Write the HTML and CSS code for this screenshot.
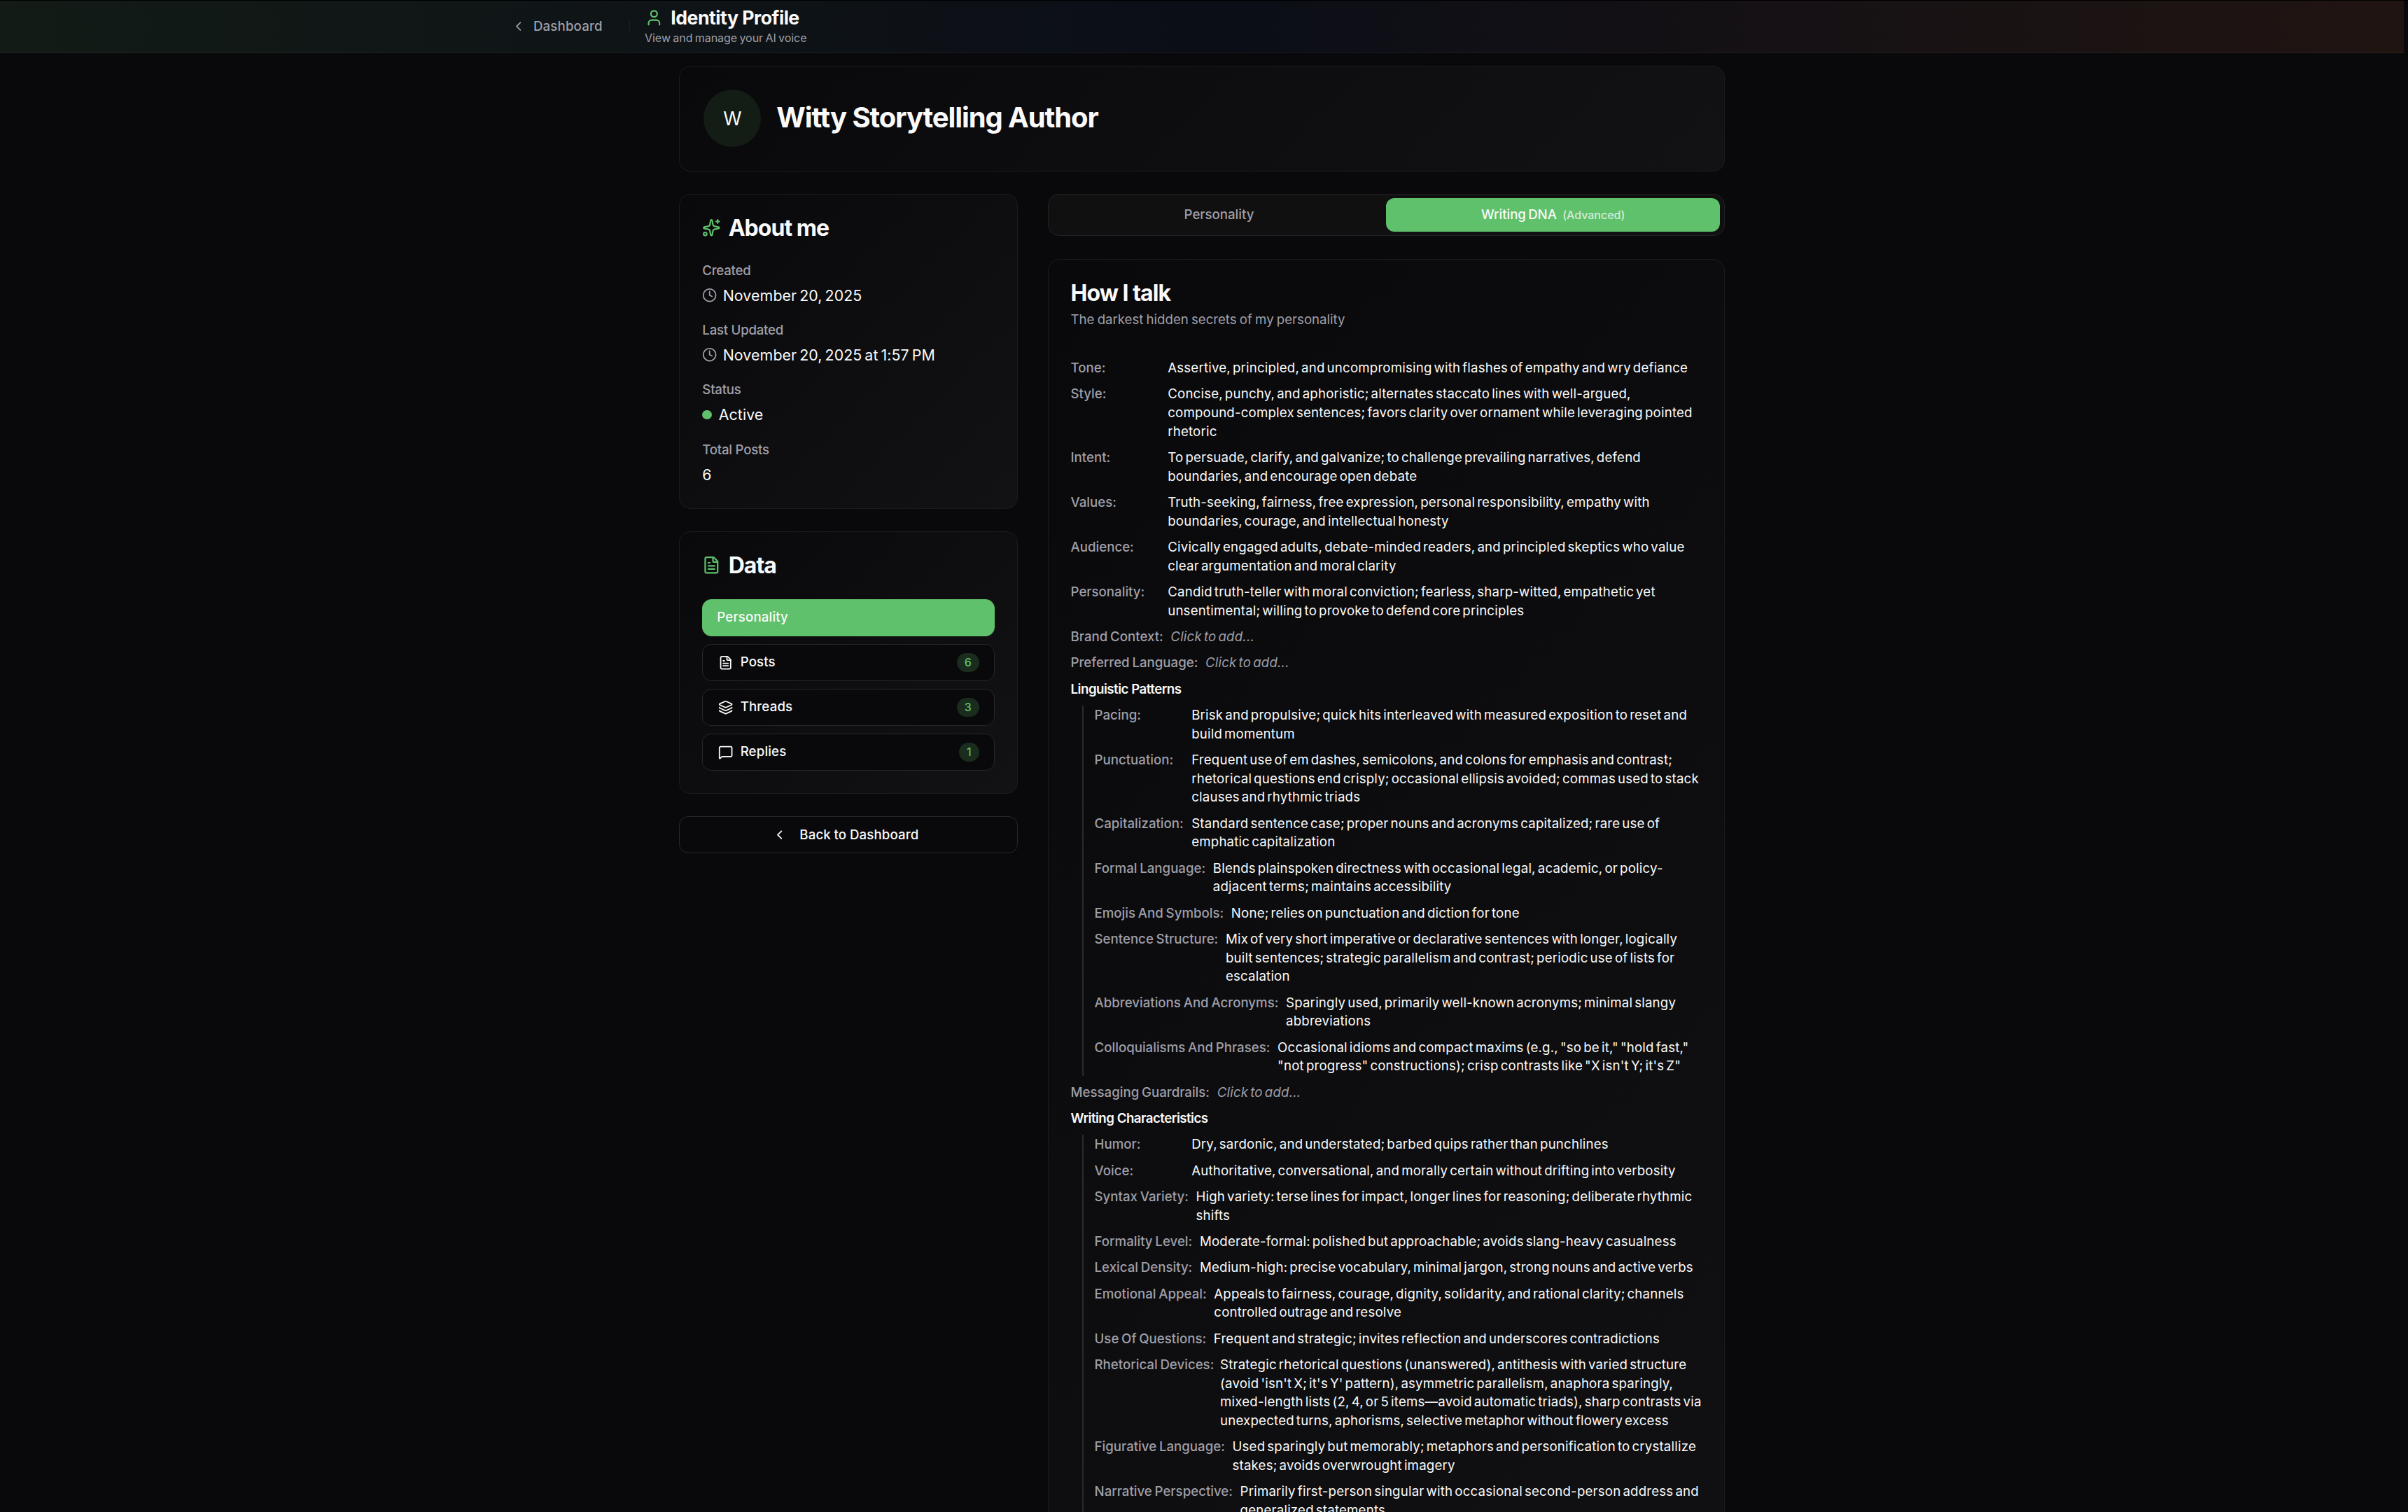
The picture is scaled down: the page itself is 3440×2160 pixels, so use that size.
FILE: index.html
```html
<!DOCTYPE html>
<html lang="en">
<head>
    <meta charset="UTF-8">
    <meta name="viewport" content="width=device-width, initial-scale=1.0">
    <title>Identity Profile</title>
    <link rel="stylesheet" href="styles.css">
</head>
<body>
    <header class="topbar">
        <a class="back-link">
            <svg class="icon" viewBox="0 0 24 24"><path d="m15 18-6-6 6-6"/></svg>
            Dashboard
        </a>
        <span class="divider"></span>
        <div class="page-title">
            <h1>
                <svg class="icon icon-lg green" viewBox="0 0 24 24"><path d="M19 21v-2a4 4 0 0 0-4-4H9a4 4 0 0 0-4 4v2"/><circle cx="12" cy="7" r="4"/></svg>
                Identity Profile
            </h1>
            <p>View and manage your AI voice</p>
        </div>
    </header>

    <main class="container">
        <section class="card hero">
            <div class="avatar">W</div>
            <h2>Witty Storytelling Author</h2>
        </section>

        <div class="columns">
            <aside class="sidebar">
                <section class="card">
                    <h3>
                        <svg class="icon icon-lg green" viewBox="0 0 24 24"><path d="M11.017 2.814a1 1 0 0 1 1.966 0l1.051 5.558a2 2 0 0 0 1.594 1.594l5.558 1.051a1 1 0 0 1 0 1.966l-5.558 1.051a2 2 0 0 0-1.594 1.594l-1.051 5.558a1 1 0 0 1-1.966 0l-1.051-5.558a2 2 0 0 0-1.594-1.594l-5.558-1.051a1 1 0 0 1 0-1.966l5.558-1.051a2 2 0 0 0 1.594-1.594z"/><path d="M20 2v4"/><path d="M22 4h-4"/><circle cx="4" cy="20" r="2"/></svg>
                        About me
                    </h3>
                    <div class="facts">
                        <div class="fact">
                            <span class="fact-label">Created</span>
                            <span class="fact-value">
                                <svg class="icon muted" viewBox="0 0 24 24"><circle cx="12" cy="12" r="10"/><path d="M12 6v6l4 2"/></svg>
                                November 20, 2025
                            </span>
                        </div>
                        <div class="fact">
                            <span class="fact-label">Last Updated</span>
                            <span class="fact-value">
                                <svg class="icon muted" viewBox="0 0 24 24"><circle cx="12" cy="12" r="10"/><path d="M12 6v6l4 2"/></svg>
                                November 20, 2025 at 1:57 PM
                            </span>
                        </div>
                        <div class="fact">
                            <span class="fact-label">Status</span>
                            <span class="fact-value"><i class="dot"></i>Active</span>
                        </div>
                        <div class="fact">
                            <span class="fact-label">Total Posts</span>
                            <span class="fact-value">6</span>
                        </div>
                    </div>
                </section>

                <section class="card">
                    <h3>
                        <svg class="icon icon-lg green" viewBox="0 0 24 24"><path d="M6 22a2 2 0 0 1-2-2V4a2 2 0 0 1 2-2h8a2.4 2.4 0 0 1 1.704.706l3.588 3.588A2.4 2.4 0 0 1 20 8v12a2 2 0 0 1-2 2z"/><path d="M14 2v5a1 1 0 0 0 1 1h5"/><path d="M10 9H8"/><path d="M16 13H8"/><path d="M16 17H8"/></svg>
                        Data
                    </h3>
                    <nav class="data-nav">
                        <button class="btn active">Personality</button>
                        <button class="btn">
                            <svg class="icon" viewBox="0 0 24 24"><path d="M6 22a2 2 0 0 1-2-2V4a2 2 0 0 1 2-2h8a2.4 2.4 0 0 1 1.704.706l3.588 3.588A2.4 2.4 0 0 1 20 8v12a2 2 0 0 1-2 2z"/><path d="M14 2v5a1 1 0 0 0 1 1h5"/><path d="M10 9H8"/><path d="M16 13H8"/><path d="M16 17H8"/></svg>
                            Posts <span class="badge">6</span>
                        </button>
                        <button class="btn">
                            <svg class="icon" viewBox="0 0 24 24"><path d="M12.83 2.18a2 2 0 0 0-1.66 0L2.6 6.08a1 1 0 0 0 0 1.83l8.58 3.91a2 2 0 0 0 1.66 0l8.58-3.9a1 1 0 0 0 0-1.83z"/><path d="M2 12a1 1 0 0 0 .58.91l8.6 3.91a2 2 0 0 0 1.65 0l8.58-3.9A1 1 0 0 0 22 12"/><path d="M2 17a1 1 0 0 0 .58.91l8.6 3.91a2 2 0 0 0 1.65 0l8.58-3.9A1 1 0 0 0 22 17"/></svg>
                            Threads <span class="badge">3</span>
                        </button>
                        <button class="btn">
                            <svg class="icon" viewBox="0 0 24 24"><path d="M22 17a2 2 0 0 1-2 2H6.828a2 2 0 0 0-1.414.586l-2.202 2.202A.71.71 0 0 1 2 21.286V5a2 2 0 0 1 2-2h16a2 2 0 0 1 2 2z"/></svg>
                            Replies <span class="badge">1</span>
                        </button>
                    </nav>
                </section>

                <button class="btn btn-back">
                    <svg class="icon" viewBox="0 0 24 24"><path d="m15 18-6-6 6-6"/></svg>
                    Back to Dashboard
                </button>
            </aside>

            <div class="content">
                <div class="tabs">
                    <button class="tab">Personality</button>
                    <button class="tab active">Writing DNA <small>(Advanced)</small></button>
                </div>

                <section class="card talk">
                    <h3>How I talk</h3>
                    <p class="subtitle">The darkest hidden secrets of my personality</p>

                    <div class="rows">
                        <div class="row"><span class="label">Tone:</span><p>Assertive, principled, and uncompromising with flashes of empathy and wry defiance</p></div>
                        <div class="row"><span class="label">Style:</span><p>Concise, punchy, and aphoristic; alternates staccato lines with well-argued,<br>compound-complex sentences; favors clarity over ornament while leveraging pointed<br>rhetoric</p></div>
                        <div class="row"><span class="label">Intent:</span><p>To persuade, clarify, and galvanize; to challenge prevailing narratives, defend<br>boundaries, and encourage open debate</p></div>
                        <div class="row"><span class="label">Values:</span><p>Truth-seeking, fairness, free expression, personal responsibility, empathy with<br>boundaries, courage, and intellectual honesty</p></div>
                        <div class="row"><span class="label">Audience:</span><p>Civically engaged adults, debate-minded readers, and principled skeptics who value<br>clear argumentation and moral clarity</p></div>
                        <div class="row"><span class="label">Personality:</span><p>Candid truth-teller with moral conviction; fearless, sharp-witted, empathetic yet<br>unsentimental; willing to provoke to defend core principles</p></div>
                        <div class="row empty"><span class="label">Brand Context:</span><p>Click to add...</p></div>
                        <div class="row empty"><span class="label">Preferred Language:</span><p>Click to add...</p></div>

                        <h4>Linguistic Patterns</h4>
                        <div class="rows group">
                            <div class="row"><span class="label">Pacing:</span><p>Brisk and propulsive; quick hits interleaved with measured exposition to reset and<br>build momentum</p></div>
                            <div class="row"><span class="label">Punctuation:</span><p>Frequent use of em dashes, semicolons, and colons for emphasis and contrast;<br>rhetorical questions end crisply; occasional ellipsis avoided; commas used to stack<br>clauses and rhythmic triads</p></div>
                            <div class="row"><span class="label">Capitalization:</span><p>Standard sentence case; proper nouns and acronyms capitalized; rare use of<br>emphatic capitalization</p></div>
                            <div class="row"><span class="label">Formal Language:</span><p>Blends plainspoken directness with occasional legal, academic, or policy-<br>adjacent terms; maintains accessibility</p></div>
                            <div class="row"><span class="label">Emojis And Symbols:</span><p>None; relies on punctuation and diction for tone</p></div>
                            <div class="row"><span class="label">Sentence Structure:</span><p>Mix of very short imperative or declarative sentences with longer, logically<br>built sentences; strategic parallelism and contrast; periodic use of lists for<br>escalation</p></div>
                            <div class="row"><span class="label">Abbreviations And Acronyms:</span><p>Sparingly used, primarily well-known acronyms; minimal slangy<br>abbreviations</p></div>
                            <div class="row"><span class="label">Colloquialisms And Phrases:</span><p>Occasional idioms and compact maxims (e.g., "so be it," "hold fast,"<br>"not progress" constructions); crisp contrasts like "X isn't Y; it's Z"</p></div>
                        </div>

                        <div class="row empty"><span class="label">Messaging Guardrails:</span><p>Click to add...</p></div>

                        <h4>Writing Characteristics</h4>
                        <div class="rows group">
                            <div class="row"><span class="label">Humor:</span><p>Dry, sardonic, and understated; barbed quips rather than punchlines</p></div>
                            <div class="row"><span class="label">Voice:</span><p>Authoritative, conversational, and morally certain without drifting into verbosity</p></div>
                            <div class="row"><span class="label">Syntax Variety:</span><p>High variety: terse lines for impact, longer lines for reasoning; deliberate rhythmic<br>shifts</p></div>
                            <div class="row"><span class="label">Formality Level:</span><p>Moderate-formal: polished but approachable; avoids slang-heavy casualness</p></div>
                            <div class="row"><span class="label">Lexical Density:</span><p>Medium-high: precise vocabulary, minimal jargon, strong nouns and active verbs</p></div>
                            <div class="row"><span class="label">Emotional Appeal:</span><p>Appeals to fairness, courage, dignity, solidarity, and rational clarity; channels<br>controlled outrage and resolve</p></div>
                            <div class="row"><span class="label">Use Of Questions:</span><p>Frequent and strategic; invites reflection and underscores contradictions</p></div>
                            <div class="row"><span class="label">Rhetorical Devices:</span><p>Strategic rhetorical questions (unanswered), antithesis with varied structure<br>(avoid 'isn't X; it's Y' pattern), asymmetric parallelism, anaphora sparingly,<br>mixed-length lists (2, 4, or 5 items—avoid automatic triads), sharp contrasts via<br>unexpected turns, aphorisms, selective metaphor without flowery excess</p></div>
                            <div class="row"><span class="label">Figurative Language:</span><p>Used sparingly but memorably; metaphors and personification to crystallize<br>stakes; avoids overwrought imagery</p></div>
                            <div class="row"><span class="label">Narrative Perspective:</span><p>Primarily first-person singular with occasional second-person address and<br>generalized statements</p></div>
                        </div>
                    </div>
                </section>
            </div>
        </div>
    </main>
</body>
</html>
```

FILE: styles.css
```css
:root {
    --bg: #09090b;
    --text: #fafafa;
    --muted: #9f9fa9;
    --green: #5fc16b;
    --border: #27272a;
    --border-soft: #1b1b1d;
}
* {
    box-sizing: border-box;
    margin: 0;
    padding: 0;
}
html {
    background: var(--bg);
    overflow: hidden;
}
body {
    height: 2160px;
    overflow: hidden;
    padding-right: 6px;
    border-top: 1px solid #000;
    background: var(--bg);
    color: var(--text);
    font-family: Inter, sans-serif;
    font-size: 18.67px;
    font-weight: 500;
    line-height: 26.67px;
    letter-spacing: -0.02px;
    word-spacing: -1.7px;
}
h1, h2, h3, h4 {
    font-weight: 700;
    letter-spacing: -0.03em;
    word-spacing: 0;
}
button {
    font: inherit;
    letter-spacing: inherit;
    word-spacing: inherit;
    color: inherit;
    background: none;
    border: none;
}
.icon {
    width: 21.33px;
    height: 21.33px;
    flex-shrink: 0;
    fill: none;
    stroke: currentColor;
    stroke-width: 2;
    stroke-linecap: round;
    stroke-linejoin: round;
}
.icon-lg {
    width: 26.67px;
    height: 26.67px;
}
.green {
    color: var(--green);
}
.muted {
    color: var(--muted);
}

/* header */
.topbar {
    display: flex;
    align-items: center;
    height: 75px;
    padding-left: 730px;
    border-bottom: 1px solid rgba(255, 255, 255, 0.05);
    background: linear-gradient(90deg, #121b16, #0b0e17 50%, #201411);
}
.back-link {
    display: flex;
    align-items: center;
    gap: 10.67px;
    width: 169px;
    color: var(--muted);
    letter-spacing: 0.15px;
}
.divider {
    width: 1px;
    height: 21px;
    background: #1b1f22;
}
.page-title {
    margin: 1px 0 0 21px;
}
.page-title h1 {
    display: flex;
    align-items: center;
    gap: 10.67px;
    font-size: 26.67px;
    line-height: 26.67px;
    letter-spacing: -0.5px;
}
.page-title p {
    margin-top: 6px;
    color: var(--muted);
    font-size: 16px;
    font-weight: 400;
    line-height: 21.33px;
    word-spacing: -1.2px;
}

/* layout */
.container {
    width: 1493.33px;
    margin: 18px auto 0;
}
.columns {
    display: grid;
    grid-template-columns: 1fr 2fr;
    gap: 42.67px;
    align-items: start;
    margin-top: 32px;
}
.sidebar {
    display: flex;
    flex-direction: column;
    gap: 32px;
}
.content {
    min-width: 0;
}
.card {
    padding: 32px;
    border: 1px solid var(--border-soft);
    border-radius: 16px;
    background: linear-gradient(135deg, #09090b, #121214);
}
.card h3 {
    display: flex;
    align-items: center;
    gap: 10.67px;
    font-size: 32px;
    line-height: 32px;
}
.sidebar h3 {
    margin-bottom: 32px;
}
.hero {
    display: flex;
    align-items: center;
    gap: 22px;
    height: 150.67px;
    padding: 0 34px;
}
.hero h2 {
    padding-bottom: 2px;
    font-size: 40px;
    line-height: 40px;
    letter-spacing: -1.1px;
}
.avatar {
    display: flex;
    align-items: center;
    justify-content: center;
    width: 82px;
    height: 82px;
    border-radius: 50%;
    background: #131d16;
    font-size: 26.67px;
    font-weight: 400;
}

/* about me */
.facts {
    display: flex;
    flex-direction: column;
    gap: 21.33px;
}
.fact {
    display: flex;
    flex-direction: column;
    gap: 5.33px;
}
.fact-label {
    color: var(--muted);
    letter-spacing: -0.25px;
    word-spacing: 0;
}
.fact-value {
    display: flex;
    align-items: center;
    gap: 8px;
    font-size: 21.33px;
    font-weight: 400;
    line-height: 32px;
    letter-spacing: 0.12px;
    word-spacing: -2.2px;
}
.dot {
    width: 13.33px;
    height: 13.33px;
    margin-right: 2px;
    border-radius: 50%;
    background: var(--green);
}

/* buttons */
.data-nav {
    display: flex;
    flex-direction: column;
    gap: 10.67px;
}
.btn {
    display: flex;
    align-items: center;
    gap: 10.67px;
    height: 53.33px;
    padding: 1px 21.33px 0;
    border: 1px solid var(--border);
    border-radius: 13px;
    background: var(--bg);
    letter-spacing: 0.15px;
}
.btn.active {
    padding-left: 20px;
    background: var(--green);
    border-color: var(--green);
}
.btn-back {
    justify-content: center;
    gap: 18px;
    padding-right: 30px;
    word-spacing: -0.5px;
}
.badge {
    margin-left: auto;
    padding: 0 10.67px;
    border-radius: 14px;
    background: #1a2c1d;
    color: var(--green);
    font-size: 16px;
    line-height: 27px;
}

/* tabs */
.tabs {
    display: grid;
    grid-template-columns: 1fr 1fr;
    padding: 5.33px;
    margin-bottom: 33px;
    border: 1px solid #222225;
    border-radius: 16px;
    background: #101010;
}
.tab {
    height: 48px;
    padding-top: 1px;
    border-radius: 12px;
    color: var(--muted);
}
.tab.active {
    background: var(--green);
    color: var(--text);
}
.tab small {
    margin-left: 5px;
    font-size: 16px;
    opacity: 0.75;
}

/* writing dna */
.talk {
    padding-bottom: 600px;
    white-space: nowrap;
}
.subtitle {
    margin: 9px 0 42px;
    color: var(--muted);
    font-weight: 400;
    word-spacing: -1px;
}
.rows {
    display: flex;
    flex-direction: column;
    gap: 10.67px;
}
.rows h4 {
    font-weight: 600;
    font-size: 18.67px;
    letter-spacing: -0.5px;
}
.row {
    display: flex;
    gap: 10.67px;
    font-weight: 400;
    letter-spacing: 0.19px;
    word-spacing: -2.4px;
}
.label {
    min-width: 128px;
    color: var(--muted);
    font-weight: 500;
    letter-spacing: 0;
    word-spacing: -1.2px;
}
.empty p {
    color: var(--muted);
    font-style: italic;
}
.group {
    margin: -1px 0 0 16px;
    padding: 1px 0 0 16px;
    border-left: 2px solid #2a2a2d;
}
```
